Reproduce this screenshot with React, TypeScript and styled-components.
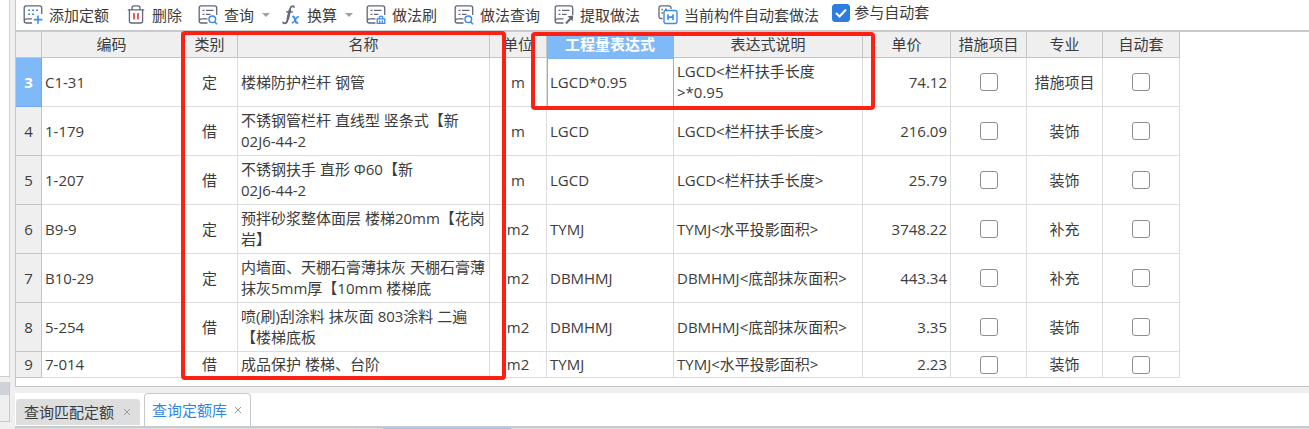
import React from "react";
import styled, { createGlobalStyle, css } from "styled-components";

const Global = createGlobalStyle`
  *, *::before, *::after { box-sizing: border-box; }
  body {
    margin: 0;
    background: #efefef;
    color: #3c3c3c;
    font-family: "Open Sans", "Noto Sans CJK SC", sans-serif;
    font-size: 15px;
    line-height: 21px;
    overflow: hidden;
  }
  button, input { font: inherit; color: inherit; }
`;

const Shell = styled.div`
  display: flex;
  height: 100vh;
`;

const Rail = styled.aside`
  flex: 0 0 10px;
  display: flex;
  flex-direction: column;
  gap: 5px;
  margin-right: 5px;
`;

const RailTop = styled.div`
  height: 377px;
  background: #fff;
  border: solid #cfcfcf;
  border-width: 0 1px 1px 0;
`;

const RailPanel = styled.div`
  height: 40px;
  background: #efefef;
  border: solid #c8c8c8;
  border-width: 0 1px 1px 0;
  &::before {
    content: "";
    display: block;
    height: 13px;
    background: #cfd2da;
  }
`;

const Main = styled.main`
  flex: 1;
  min-width: 0;
  display: flex;
  flex-direction: column;
  gap: 6px;
`;

const Upper = styled.section`
  background: #fff;
  border: solid #c4c7ca;
  border-width: 0 0 1px 1px;
  padding-bottom: 8px;
`;

const Toolbar = styled.div`
  display: flex;
  align-items: center;
  height: 32px;
  padding-left: 7px;
  border-bottom: 2px solid #c6cacd;
  white-space: nowrap;
`;

const Tool = styled.button<{ $after: number }>`
  display: flex;
  align-items: center;
  gap: 6px;
  padding: 0;
  margin: 0 ${(p) => p.$after}px 0 0;
  border: 0;
  background: none;
  svg { flex: none; display: block; }
`;

const Caret = styled.span`
  margin-left: 2px;
  border: solid transparent;
  border-width: 4px 4px 0;
  border-top-color: #a0a0a0;
`;

const Box = styled.input`
  appearance: none;
  display: block;
  flex: none;
  width: 18px;
  height: 18px;
  margin: 0 auto;
  border: 1px solid #8e8e8e;
  border-radius: 3px;
  background: #fff;
  &:checked {
    border-color: #2b7de0;
    background: #2b7de0 url("data:image/svg+xml,%3Csvg xmlns='http://www.w3.org/2000/svg' viewBox='0 0 16 16' fill='none' stroke='white' stroke-width='2'%3E%3Cpath d='M3 8l3.500 3.500L13 4.500'/%3E%3C/svg%3E") center / 16px no-repeat;
  }
`;

const Option = styled.label`
  display: flex;
  align-items: center;
  gap: 4px;
  padding-bottom: 5px;
`;

const Sheet = styled.div`
  position: relative;
`;

const Grid = styled.table`
  table-layout: fixed;
  width: 1164px;
  border-collapse: separate;
  border-spacing: 0;
`;

const Col = styled.col<{ $w: number }>`
  width: ${(p) => p.$w}px;
`;

const Head = styled.th<{ $active?: boolean }>`
  height: 26px;
  padding: 0;
  font-weight: 400;
  background: #efefef;
  border: solid #c4c4c4;
  border-width: 0 1px 1px 0;
  white-space: nowrap;
  ${(p) =>
    p.$active &&
    css`
      background: #80b9f8;
      border-color: #80b9f8;
      color: #fff;
      font-weight: 700;
    `}
`;

const RowHead = styled.th<{ $active?: boolean }>`
  padding: 0;
  font-weight: 400;
  background: #efefef;
  border: solid #c4c4c4;
  border-width: 0 1px 1px 0;
  ${(p) =>
    p.$active &&
    css`
      background: #80b9f8;
      border-color: #6fabef;
      color: #fff;
      font-weight: 700;
    `}
`;

const Cell = styled.td<{ $align?: string; $focus?: boolean }>`
  padding: 0 3px;
  text-align: ${(p) => p.$align ?? "left"};
  border: solid #dcdcdc;
  border-width: 0 1px 1px 0;
  ${(p) =>
    p.$focus &&
    css`
      border-color: #80b3ee;
      box-shadow: inset 1px 1px 0 #80b3ee;
    `}
`;

const Row = styled.tr<{ $short?: boolean }>`
  height: ${(p) => (p.$short ? 26 : 49)}px;
`;

const Mark = styled.div<{ $x: number; $y: number; $w: number; $h: number }>`
  position: absolute;
  left: ${(p) => p.$x}px;
  top: ${(p) => p.$y}px;
  width: ${(p) => p.$w}px;
  height: ${(p) => p.$h}px;
  border: 4px solid #ff2014;
  border-radius: 4px;
  pointer-events: none;
`;

const Lower = styled.section`
  flex: 1;
  background: #fff;
`;

const Tabs = styled.div`
  display: flex;
  align-items: flex-end;
  gap: 4px;
  height: 35px;
  padding-left: 1px;
  border-bottom: 2px solid #c6cacd;
`;

const Tab = styled.div<{ $active?: boolean }>`
  display: flex;
  align-items: center;
  gap: 8px;
  height: 26px;
  margin-bottom: 1px;
  padding: 0 8px;
  border-radius: 4px 4px 0 0;
  background: #dedede;
  ${(p) =>
    p.$active &&
    css`
      gap: 6px;
      height: 33px;
      margin-bottom: 0;
      padding: 0 7px;
      background: #fff;
      border: 1px solid #c6cacd;
      border-bottom: 0;
      color: #2f86ea;
    `}
`;

const Plain = styled.button`
  padding: 0;
  border: 0;
  background: none;
`;

const Close = styled(Plain)`
  display: flex;
  width: 10px;
  color: #999;
  svg { display: block; }
`;

const Results = styled.div`
  display: grid;
  grid-template-columns: 337px 30px 128px 1fr;
  height: 8px;
  padding-left: 1px;
  background: #d9dbde;
`;

const ResultPane = styled.div<{ $active?: boolean }>`
  background: ${(p) => (p.$active ? "#9dbfe8" : "#dfe0e2")};
`;

const ink = "#62677a";
const blue = "#3a8cf0";

const Icon = ({ children }: { children: React.ReactNode }) => (
  <svg width="20" height="20" viewBox="0 0 20 20" fill="none" stroke={ink} strokeWidth="1.3" aria-hidden="true">
    {children}
  </svg>
);

const SheetShape = () => (
  <>
    <path d="M9.500 18H3.500Q1.200 18 1.200 16V3Q1.200 .8 3 .8H16.700Q18.700 .8 18.700 3V10M1.300 15.500Q1.800 13.800 4 13.800H9.500" />
    <path d="M4.500 5.300H6.500M8 5.300H15.500M4.500 9.300H6.500M8 9.300H12.500" />
  </>
);

const AddIcon = () => (
  <Icon>
    <path d="M9 18H3.500Q1.200 18 1.200 16V3Q1.200 .8 3 .8H16.700Q18.700 .8 18.700 3V9M1.300 15.500Q1.800 13.800 4 13.800H9" />
    <path d="M5 5.300H15.500M5 9.300H12" stroke={blue} strokeDasharray="2 2" strokeWidth="1.500" />
    <path d="M15 10.500V18.800M10.800 14.600H19.300" stroke={blue} strokeWidth="1.600" />
  </Icon>
);
const TrashIcon = () => (
  <Icon>
    <path d="M1.800 4.800H18.200M6 4.800V3Q6 .8 8 .8H12Q14 .8 14 3V4.800M3.400 4.800V16Q3.400 18 5.400 18H14.600Q16.600 18 16.600 16V4.800" />
    <path d="M8 8V14.500M12 8V14.500" stroke="#e23b3b" strokeWidth="1.600" />
  </Icon>
);
const SearchIcon = () => (
  <Icon>
    <SheetShape />
    <circle cx="14.300" cy="14.300" r="3.300" stroke={blue} strokeWidth="1.500" />
    <path d="M16.600 16.700L19 19.300" stroke={blue} strokeWidth="1.500" />
  </Icon>
);
const BrushIcon = () => (
  <Icon>
    <SheetShape />
    <path d="M11.200 18.300V13.800H18.800V18.300ZM13.300 13.500V12Q15 10.300 16.700 12V13.500M13.700 15.500V18.300M16.300 15.500V18.300" stroke={blue} strokeWidth="1.300" />
  </Icon>
);
const ExtractIcon = () => (
  <Icon>
    <SheetShape />
    <path d="M12 18.500L17 13" strokeWidth="1.900" />
    <path d="M13.500 11.200L19.300 10.500L18.600 16.300Z" fill={ink} stroke="none" />
  </Icon>
);
const AutoIcon = () => (
  <Icon>
    <path d="M4.500 13.500H3Q1 13.500 1 11.500V3Q1 .8 3 .8H11Q13 .8 13 3V4M3.500 4.500H5M3.500 8H5M7 4.500H9" />
    <rect x="6" y="5.500" width="13" height="13" rx="2" stroke={blue} strokeWidth="1.400" />
    <path d="M10 9.200V15M15 9.200V15M10 12.100H15" stroke={blue} strokeWidth="1.600" />
  </Icon>
);
const FxIcon = () => (
  <Icon>
    <path d="M12.800 2.800Q13.200 1 11.500 1.100Q9.500 1.300 8.700 5.500L6.700 14.500Q6 18.300 3.500 18.300Q1.800 18.200 2.300 16.800" strokeWidth="1.800" />
    <path d="M9 4.500L6.700 14.500" strokeWidth="2.500" />
    <path d="M5.200 6.900H11.800" strokeWidth="1.500" />
    <path d="M11.300 11.800Q13.200 11 13.800 13.500L14.700 16.700Q15.300 18.600 17.200 17.300" stroke={blue} strokeWidth="2" />
    <path d="M17.800 12Q16.200 11.300 14.400 14.500Q12.500 18.600 10.900 17.300" stroke={blue} strokeWidth="1.500" />
  </Icon>
);

const tools = [
  { icon: AddIcon, label: "添加定额", after: 17 },
  { icon: TrashIcon, label: "删除", after: 16 },
  { icon: SearchIcon, label: "查询", menu: true, after: 11 },
  { icon: FxIcon, label: "换算", menu: true, after: 13 },
  { icon: BrushIcon, label: "做法刷", after: 17 },
  { icon: SearchIcon, label: "做法查询", after: 14 },
  { icon: ExtractIcon, label: "提取做法", after: 18 },
  { icon: AutoIcon, label: "当前构件自动套做法", after: 13 },
];

const widths = [26, 140, 56, 252, 57, 127, 189, 88, 76, 76, 77];
const heads = ["", "编码", "类别", "名称", "单位", "工程量表达式", "表达式说明", "单价", "措施项目", "专业", "自动套"];

const rows = [
  ["3", "C1-31", "定", "楼梯防护栏杆 钢管", "m", "LGCD*0.95", "LGCD<栏杆扶手长度\n>*0.95", "74.12", "措施项目"],
  ["4", "1-179", "借", "不锈钢管栏杆 直线型 竖条式【新\n02J6-44-2", "m", "LGCD", "LGCD<栏杆扶手长度>", "216.09", "装饰"],
  ["5", "1-207", "借", "不锈钢扶手 直形 Φ60【新\n02J6-44-2", "m", "LGCD", "LGCD<栏杆扶手长度>", "25.79", "装饰"],
  ["6", "B9-9", "定", "预拌砂浆整体面层 楼梯20mm【花岗\n岩】", "m2", "TYMJ", "TYMJ<水平投影面积>", "3748.22", "补充"],
  ["7", "B10-29", "定", "内墙面、天棚石膏薄抹灰 天棚石膏薄\n抹灰5mm厚【10mm 楼梯底", "m2", "DBMHMJ", "DBMHMJ<底部抹灰面积>", "443.34", "补充"],
  ["8", "5-254", "借", "喷(刷)刮涂料 抹灰面 803涂料 二遍\n【楼梯底板", "m2", "DBMHMJ", "DBMHMJ<底部抹灰面积>", "3.35", "装饰"],
  ["9", "7-014", "借", "成品保护 楼梯、台阶", "m2", "TYMJ", "TYMJ<水平投影面积>", "2.23", "装饰"],
];

const Lines = styled.div`
  white-space: pre;
`;

const CloseMark = ({ label }: { label: string }) => (
  <Close aria-label={label}>
    <svg width="10" height="10" viewBox="0 0 10 10" stroke="currentColor" fill="none">
      <path d="M2 2l6 6M8 2l-6 6" />
    </svg>
  </Close>
);

export default function App() {
  return (
    <>
      <Global />
      <Shell>
        <Rail>
          <RailTop />
          <RailPanel />
        </Rail>
        <Main>
          <Upper>
            <Toolbar>
              {tools.map(({ icon: I, label, menu, after }) => (
                <Tool key={label} $after={after}>
                  <I />
                  {label}
                  {menu && <Caret />}
                </Tool>
              ))}
              <Option>
                <Box type="checkbox" defaultChecked />
                参与自动套
              </Option>
            </Toolbar>
            <Sheet>
              <Grid>
                <colgroup>
                  {widths.map((w, i) => (
                    <Col key={i} $w={w} />
                  ))}
                </colgroup>
                <thead>
                  <tr>
                    {heads.map((h, i) => (
                      <Head key={i} scope="col" $active={i === 5}>{h}</Head>
                    ))}
                  </tr>
                </thead>
                <tbody>
                  {rows.map(([no, code, kind, name, unit, expr, note, price, trade], i) => (
                    <Row key={no} $short={i === 6}>
                      <RowHead scope="row" $active={i === 0}>{no}</RowHead>
                      <Cell>{code}</Cell>
                      <Cell $align="center">{kind}</Cell>
                      <Cell><Lines>{name}</Lines></Cell>
                      <Cell $align="center">{unit}</Cell>
                      <Cell $focus={i === 0}>{expr}</Cell>
                      <Cell><Lines>{note}</Lines></Cell>
                      <Cell $align="right">{price}</Cell>
                      <Cell><Box type="checkbox" aria-label={`措施项目 ${no}`} /></Cell>
                      <Cell $align="center">{trade}</Cell>
                      <Cell><Box type="checkbox" aria-label={`自动套 ${no}`} /></Cell>
                    </Row>
                  ))}
                </tbody>
              </Grid>
              <Mark $x={165} $y={-1} $w={325} $h={349} />
              <Mark $x={515} $y={0} $w={344} $h={78} />
            </Sheet>
          </Upper>
          <Lower>
            <Tabs>
              <Tab>
                <Plain>查询匹配定额</Plain>
                <CloseMark label="关闭 查询匹配定额" />
              </Tab>
              <Tab $active>
                <Plain>查询定额库</Plain>
                <CloseMark label="关闭 查询定额库" />
              </Tab>
            </Tabs>
            <Results>
              <ResultPane />
              <span />
              <ResultPane $active />
            </Results>
          </Lower>
        </Main>
      </Shell>
    </>
  );
}
